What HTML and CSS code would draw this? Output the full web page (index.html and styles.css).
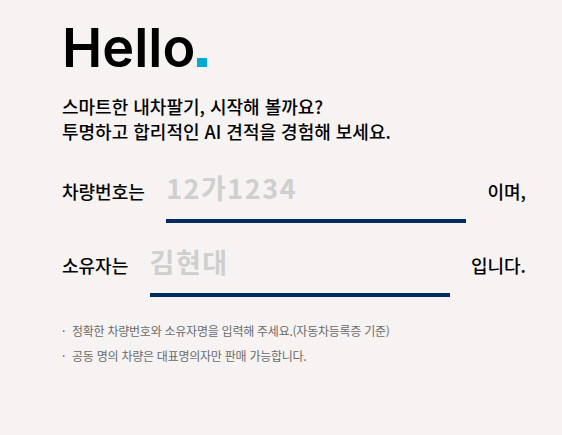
FILE: index.html
```html
<!DOCTYPE html>
<html lang="ko">
<head>
  <meta charset="UTF-8" />
  <meta name="viewport" content="width=device-width, initial-scale=1.0"/>
  <title>내차팔기</title>
  <link rel="stylesheet" href="styles.css">
</head>
<body>

<div class="container">
  <h1 class="hello">Hello<span class="dot"></span></h1>
  <p class="intro">스마트한 내차팔기, 시작해 볼까요?<br>투명하고 합리적인 AI 견적을 경험해 보세요.</p>

  <form class="car-form">
    <div class="row">
      <label for="carNo">차량번호는</label>
      <input type="text" id="carNo" name="carNo" placeholder="12가1234" />
      <span class="tail">이며,</span>
    </div>
    <div class="row">
      <label for="owner">소유자는</label>
      <input type="text" id="owner" name="owner" placeholder="김현대" />
      <span class="tail">입니다.</span>
    </div>
  </form>

  <ul class="notes">
    <li>정확한 차량번호와 소유자명을 입력해 주세요.(자동차등록증 기준)</li>
    <li>공동 명의 차량은 대표명의자만 판매 가능합니다.</li>
  </ul>
</div>

</body>
</html>
```

FILE: styles.css
```css
body { margin: 0; padding: 0; background: #f6f3f2; font-family: "Noto Sans CJK KR", "Noto Sans", sans-serif; color: #000; }
.container { width: 464px; padding: 22px 0 0 62px; }
.hello { margin: 0; font-family: Inter, "Noto Sans", sans-serif; font-size: 54px; font-weight: 600; line-height: 52px; letter-spacing: 0; }
.dot { display: inline-block; width: 10px; height: 9px; margin-left: 2px; background: #00aad2; }
.intro { margin: 20px 0 0; font-size: 18px; font-weight: 500; line-height: 25px; }
.car-form { margin-top: 26px; }
.row { display: flex; justify-content: space-between; align-items: baseline; margin-bottom: 21px; }
.row:last-child { margin-bottom: 0; }
.row label, .row .tail { font-size: 18px; font-weight: 500; }
.row input { width: 300px; box-sizing: border-box; padding: 0 0 13px; border: none; border-bottom: 4px solid #002c5f; background: transparent; font-family: inherit; font-size: 27px; font-weight: 700; line-height: 36px; letter-spacing: 1.5px; outline: none; }
.row input::placeholder { color: #cfcfcf; }
.notes { margin: 21px 0 0; padding: 0; list-style: none; font-size: 12px; line-height: 25px; letter-spacing: -0.25px; color: #6b6b6b; }
.notes li::before { content: "·"; display: inline-block; width: 10px; }
```
